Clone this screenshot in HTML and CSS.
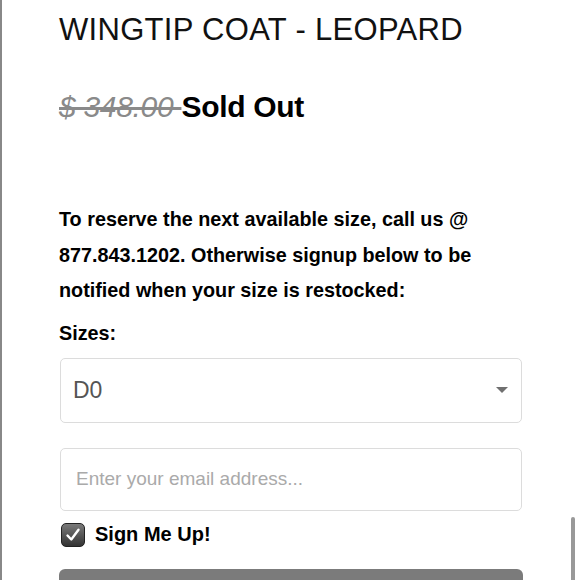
FILE: index.html
```html
<!DOCTYPE html>
<html lang="en">
<head>
    <meta charset="UTF-8">
    <meta name="viewport" content="width=device-width, initial-scale=1.0">
    <title>Wingtip Coat - Leopard</title>
    <link rel="stylesheet" href="styles.css">
</head>
<body>
    <div class="page">
        <div class="product">
            <h1 class="product-title">WINGTIP COAT - LEOPARD</h1>

            <p class="price">
                <span class="price-old">$ 348.00 </span><span class="price-status">Sold Out</span>
            </p>

            <p class="notice">To reserve the next available size, call us @ 877.843.1202. Otherwise signup below to be notified when your size is restocked:</p>

            <form class="restock-form">
                <label class="field-label" for="size">Sizes:</label>
                <div class="select-wrap">
                    <select id="size" name="size">
                        <option>D0</option>
                        <option>D1</option>
                        <option>D2</option>
                    </select>
                    <span class="select-arrow"></span>
                </div>

                <input type="email" class="email-input" placeholder="Enter your email address...">

                <label class="signup">
                    <span class="checkbox">
                        <svg width="16" height="16" viewBox="0 0 16 16">
                            <path d="M2.5 8.5 L6.3 12.5 L13.5 2.8" fill="none" stroke="#fff" stroke-width="2.4" stroke-linecap="round" stroke-linejoin="round"/>
                        </svg>
                    </span>
                    Sign Me Up!
                </label>

                <button type="button" class="notify-btn">Notify Me</button>
            </form>
        </div>
    </div>
    <div class="scrollbar"></div>
</body>
</html>
```

FILE: styles.css
```css
* {
    margin: 0;
    padding: 0;
    box-sizing: border-box;
}
body {
    font-family: 'Liberation Sans', Arial, sans-serif;
    background-color: #fff;
    color: #000;
    overflow: hidden;
    height: 580px;
}
.page {
    border-left: 2px solid #888;
    min-height: 580px;
    padding-left: 57px;
}
.product {
    width: 463px;
}
.product-title {
    font-size: 31px;
    font-weight: normal;
    line-height: 1;
    padding-top: 14px;
    letter-spacing: 0.3px;
    color: #111;
}
.price {
    margin-top: 47px;
    font-size: 30px;
    letter-spacing: -0.3px;
    line-height: 1;
}
.price-old {
    font-style: italic;
    color: #8a8a8a;
    text-decoration: line-through;
}
.price-status {
    font-weight: bold;
}
.notice {
    margin-top: 80px;
    font-size: 19.8px;
    font-weight: bold;
    line-height: 35.5px;
}
.field-label {
    display: block;
    font-size: 19.8px;
    font-weight: bold;
    line-height: 36px;
    margin-top: 6px;
    margin-bottom: 7px;
}
.select-wrap {
    position: relative;
    margin-left: 1px;
}
.select-wrap select {
    appearance: none;
    -webkit-appearance: none;
    width: 462px;
    height: 65px;
    border: 1px solid #dcdcdc;
    border-radius: 5px;
    background: #fff;
    font-family: 'Liberation Sans', Arial, sans-serif;
    font-size: 23px;
    color: #555;
    padding-left: 12px;
}
.select-arrow {
    position: absolute;
    right: 14px;
    top: 29px;
    width: 0;
    height: 0;
    border-left: 6px solid transparent;
    border-right: 6px solid transparent;
    border-top: 6px solid #707070;
}
.email-input {
    display: block;
    margin-top: 25px;
    margin-left: 1px;
    width: 462px;
    height: 63px;
    border: 1px solid #dcdcdc;
    border-radius: 5px;
    padding-left: 15px;
    font-family: 'Liberation Sans', Arial, sans-serif;
    font-size: 19px;
}
.email-input::placeholder {
    color: #aaa;
}
.signup {
    display: flex;
    align-items: center;
    gap: 10px;
    margin-top: 12px;
    margin-left: 2px;
    font-size: 20px;
    font-weight: bold;
}
.checkbox {
    display: flex;
    align-items: center;
    justify-content: center;
    width: 24px;
    height: 24px;
    border-radius: 5px;
    border: 1px solid #222;
    background: linear-gradient(#7a7a7a, #333);
}
.notify-btn {
    display: block;
    margin-top: 22px;
    width: 464px;
    height: 80px;
    border: none;
    border-radius: 6px;
    background-color: #7b7b7b;
    color: #fff;
    font-size: 18px;
    font-weight: bold;
}
.scrollbar {
    position: absolute;
    left: 571px;
    top: 517px;
    width: 4px;
    height: 80px;
    border-radius: 2px;
    background-color: #999;
}
```
